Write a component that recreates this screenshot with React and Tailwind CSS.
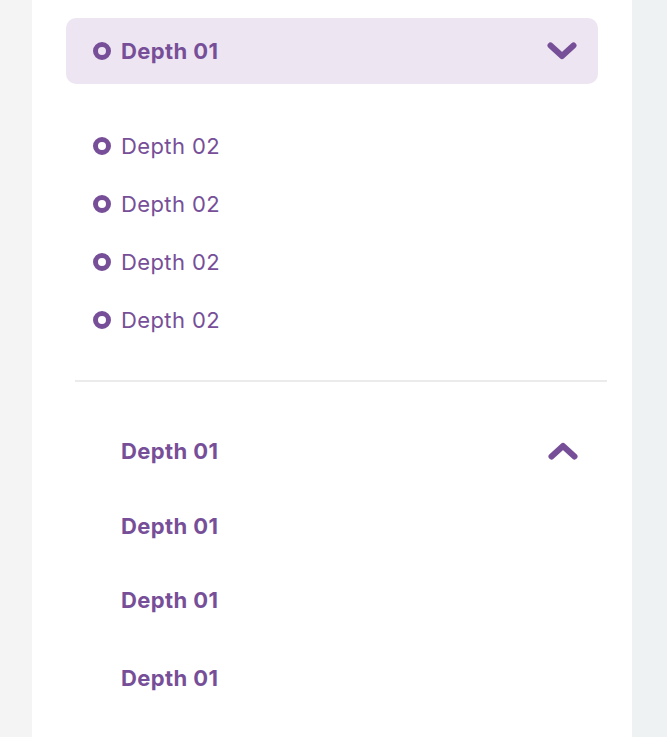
import React from 'react';

const purple = '#774f98';

function Ring() {
  return (
    <svg width="18" height="18" viewBox="0 0 18 18" className="shrink-0">
      <circle cx="9" cy="9" r="6.5" fill="none" stroke={purple} strokeWidth="5" />
    </svg>
  );
}

function Chevron({ up }) {
  return (
    <svg width="30" height="18" viewBox="0 0 30 18" className="shrink-0">
      <path
        d={up ? 'M3.5 14.5 L15 4 L26.5 14.5' : 'M3.5 3.5 L15 14 L26.5 3.5'}
        fill="none"
        stroke={purple}
        strokeWidth="6"
        strokeLinecap="round"
        strokeLinejoin="round"
      />
    </svg>
  );
}

export default function App() {
  const subs = ['Depth 02', 'Depth 02', 'Depth 02', 'Depth 02'];

  return (
    <div
      className="flex w-[667px] h-[737px] overflow-hidden bg-[#f4f4f4] text-[#774f98]"
      style={{ fontFamily: 'Inter, "Noto Sans", sans-serif' }}
    >
      <div className="w-[32px] shrink-0 bg-[#f4f4f4]" />
      <div className="w-[600px] shrink-0 bg-white pt-[18px]">
        {/* open section */}
        <div className="mx-[34px] h-[66px] rounded-[10px] bg-[#ede6f2] flex items-center justify-between pl-[27px] pr-[21px]">
          <div className="flex items-center gap-[10px]">
            <Ring />
            <span className="text-[22px] font-bold leading-none tracking-[0.4px]">Depth 01</span>
          </div>
          <Chevron />
        </div>

        <div className="mt-[33px] pl-[61px]">
          {subs.map((s, i) => (
            <div key={i} className="h-[58px] flex items-center gap-[10px]">
              <Ring />
              <span className="text-[22px] leading-none tracking-[0.4px]">{s}</span>
            </div>
          ))}
        </div>

        <div className="mt-[31px] ml-[43px] mr-[25px] h-[2px] bg-[#ebebeb]" />

        {/* collapsed section */}
        <div className="mt-[31px] pl-[89px] pr-[54px]">
          <div className="h-[75px] flex items-center justify-between">
            <span className="text-[22px] font-bold leading-none tracking-[0.4px]">Depth 01</span>
            <Chevron up />
          </div>
          <div className="h-[75px] flex items-center">
            <span className="text-[22px] font-bold leading-none tracking-[0.4px]">Depth 01</span>
          </div>
          <div className="h-[74px] flex items-center">
            <span className="text-[22px] font-bold leading-none tracking-[0.4px]">Depth 01</span>
          </div>
          <div className="h-[82px] flex items-center">
            <span className="text-[22px] font-bold leading-none tracking-[0.4px]">Depth 01</span>
          </div>
        </div>
      </div>
      <div className="flex-1 bg-[#eff2f2]" />
    </div>
  );
}
